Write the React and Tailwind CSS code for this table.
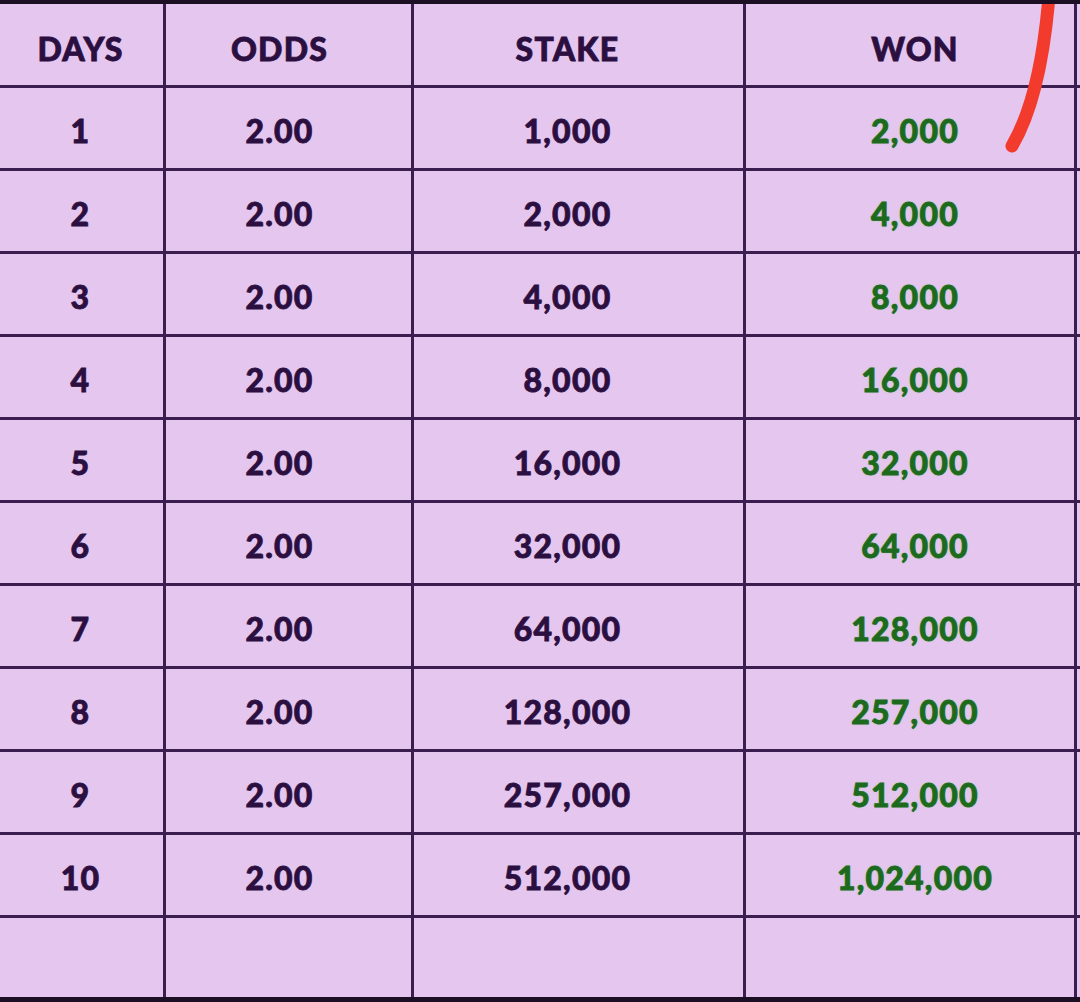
// App.jsx
// Martingale-style staking table: 10 days, odds 2.00, doubling stake.

const rows = [
  { day: "1", stake: "1,000", won: "2,000" },
  { day: "2", stake: "2,000", won: "4,000" },
  { day: "3", stake: "4,000", won: "8,000" },
  { day: "4", stake: "8,000", won: "16,000" },
  { day: "5", stake: "16,000", won: "32,000" },
  { day: "6", stake: "32,000", won: "64,000" },
  { day: "7", stake: "64,000", won: "128,000" },
  { day: "8", stake: "128,000", won: "257,000" },
  { day: "9", stake: "257,000", won: "512,000" },
  { day: "10", stake: "512,000", won: "1,024,000" },
];

const cell =
  "flex items-center justify-center border-r-[3px] border-b-[3px] border-[#3b1d50]";
const lastCell = "flex items-center justify-center border-r-[3px] border-[#3b1d50]";

const Row = ({ day, odds, stake, won, header, last }) => {
  const base = `${last ? lastCell : cell} ${header ? "pt-[8px]" : "pt-[5px]"}`;
  const ink = "text-[#2b0f40]";
  return (
    <>
      <div className={`${base} ${ink} pr-[2px]`}>{day}</div>
      <div className={`${base} ${ink} pr-[18px]`}>{odds}</div>
      <div className={`${base} ${ink} pr-[22px]`}>{stake}</div>
      <div
        className={`${base} ${
          header
            ? "text-[#2b0f40]"
            : "text-[#1d6a1f] [text-shadow:0_0_2px_#8fd68a]"
        } pl-[10px]`}
      >
        {won}
      </div>
      <div className={last ? "" : "border-b-[3px] border-[#3b1d50]"} />
    </>
  );
};

export default function App() {
  return (
    <div className="relative h-[1002px] w-[1080px] overflow-hidden border-t-4 border-b-[5px] border-[#1c0f24] bg-[#e4c6ef] font-['Lato','Noto_Sans',sans-serif] text-[32px] font-black tracking-[1.2px] [-webkit-text-stroke:0.8px_currentColor]">
      <div className="grid h-full grid-cols-[166px_248px_332px_331px_3px] grid-rows-[84px_repeat(10,83px)_1fr]">
        <Row day="DAYS" odds="ODDS" stake="STAKE" won="WON" header />
        {rows.map((r) => (
          <Row key={r.day} day={r.day} odds="2.00" stake={r.stake} won={r.won} />
        ))}
        <Row day="" odds="" stake="" won="" last />
      </div>

      {/* red pen mark over the top-right corner */}
      <svg
        className="pointer-events-none absolute left-0 top-[-4px]"
        width="1080"
        height="200"
        viewBox="0 0 1080 200"
      >
        <path
          d="M1049 -4 C1045 45, 1036 105, 1012 146"
          fill="none"
          stroke="#f23b2c"
          strokeWidth="13"
          strokeLinecap="round"
        />
      </svg>
    </div>
  );
}
